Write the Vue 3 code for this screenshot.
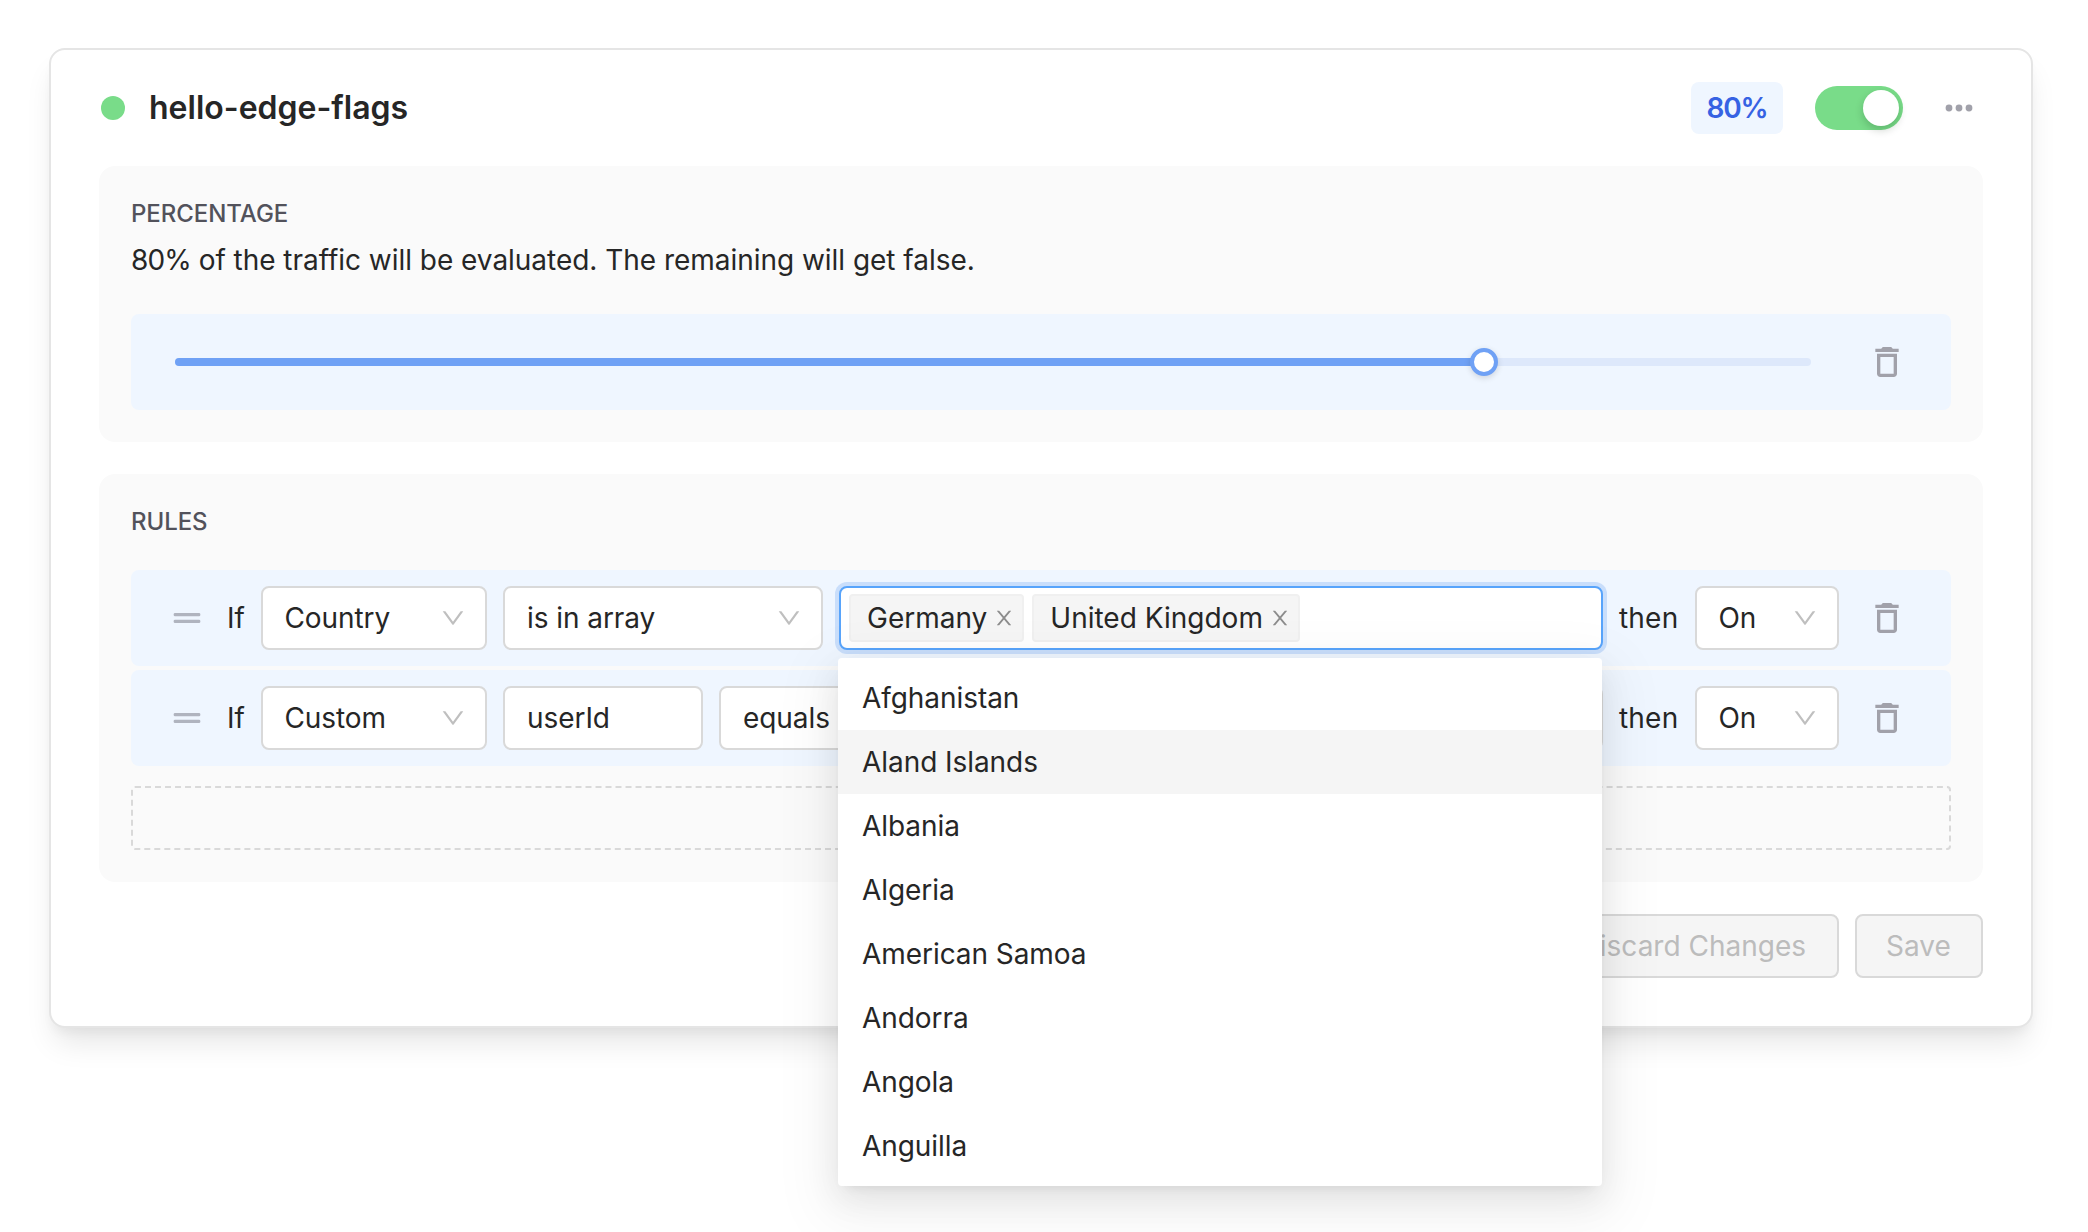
<script setup>
import { ref, computed } from 'vue'

const percentage = ref(80)
const percent = computed(() => `${percentage.value}%`)
const selected = ['Germany', 'United Kingdom']
const countries = [
  'Afghanistan',
  'Aland Islands',
  'Albania',
  'Algeria',
  'American Samoa',
  'Andorra',
  'Angola',
  'Anguilla',
]
const active = 'Aland Islands'
const rules = [
  { id: 1, field: 'Country', operator: 'is in array', tags: selected, result: 'On' },
  { id: 2, field: 'Custom', key: 'userId', operator: 'equals', result: 'On' },
]

const chevron =
  'M884 256h-75c-5.1 0-9.9 2.5-12.9 6.6L512 654.2 227.9 262.6c-3-4.1-7.8-6.6-12.9-6.6h-75c-6.5 0-10.3 7.4-6.5 12.7l352.6 486.1c12.8 17.6 39 17.6 51.7 0l352.6-486.1c3.9-5.3.1-12.7-6.4-12.7z'
const cross =
  'M563.8 512l262.5-312.9c4.4-5.2.7-13.1-6.1-13.1h-79.8c-4.7 0-9.2 2.1-12.3 5.7L511.6 449.8 295.1 191.7c-3-3.6-7.5-5.7-12.3-5.7H203c-6.8 0-10.5 7.9-6.1 13.1L459.4 512 196.9 824.9A7.95 7.95 0 00203 838h79.8c4.7 0 9.2-2.1 12.3-5.7l216.5-258.1 216.5 258.1c3 3.6 7.5 5.7 12.3 5.7h79.8c6.8 0 10.5-7.9 6.1-13.1L563.8 512z'
const trash =
  'M6 19c0 1.1.9 2 2 2h8c1.1 0 2-.9 2-2V7H6v12zM8 9h8v10H8V9zm7.5-5l-1-1h-5l-1 1H5v2h14V4z'
</script>

<template>
  <main class="page">
    <section class="card">
      <header class="head">
        <span class="status"></span>
        <h1 class="title">hello-edge-flags</h1>
        <span class="badge">{{ percent }}</span>
        <span class="toggle"><span class="knob"></span></span>
        <svg class="more" viewBox="0 0 32 32">
          <circle cx="6" cy="16" r="3.4" />
          <circle cx="16" cy="16" r="3.4" />
          <circle cx="26" cy="16" r="3.4" />
        </svg>
      </header>

      <section class="panel">
        <h2 class="label">PERCENTAGE</h2>
        <p class="desc">
          <span class="amount">{{ percent }}</span> of the traffic will be evaluated. The remaining will get false.
        </p>
        <div class="strip slider-strip">
          <div class="rail">
            <div class="fill" :style="{ width: percent }"></div>
            <span class="handle" :style="{ left: percent }"></span>
          </div>
          <svg class="trash" viewBox="0 0 24 24"><path :d="trash" /></svg>
        </div>
      </section>

      <section class="panel rules">
        <h2 class="label">RULES</h2>
        <div class="rows">
          <div v-for="rule in rules" :key="rule.id" class="strip rule">
            <svg class="drag" viewBox="0 0 24 24">
              <rect x="4" y="9" width="16" height="2" rx="0.8" />
              <rect x="4" y="13" width="16" height="2" rx="0.8" />
            </svg>
            <span class="if">If</span>
            <div class="field country">
              <span>{{ rule.field }}</span>
              <svg class="chevron" viewBox="64 64 896 896"><path :d="chevron" /></svg>
            </div>
            <div v-if="rule.key" class="field key">{{ rule.key }}</div>
            <div class="field operator" :class="{ short: rule.key }">
              <span>{{ rule.operator }}</span>
              <svg class="chevron" viewBox="64 64 896 896"><path :d="chevron" /></svg>
            </div>
            <div v-if="rule.tags" class="field value multi">
              <span v-for="tag in rule.tags" :key="tag" class="tag">
                {{ tag }}
                <svg class="cross" viewBox="64 64 896 896"><path :d="cross" /></svg>
              </span>
              <ul class="menu">
                <li v-for="c in countries" :key="c" :class="{ active: c === active }">{{ c }}</li>
              </ul>
            </div>
            <div v-else class="field value"></div>
            <span class="then">then</span>
            <div class="field result">
              <span>{{ rule.result }}</span>
              <svg class="chevron" viewBox="64 64 896 896"><path :d="chevron" /></svg>
            </div>
            <svg class="trash" viewBox="0 0 24 24"><path :d="trash" /></svg>
          </div>
        </div>
        <div class="dropzone"></div>
      </section>

      <footer class="actions">
        <button class="btn" disabled>Discard Changes</button>
        <button class="btn save" disabled>Save</button>
      </footer>
    </section>
  </main>
</template>

<style>
body {
  background: #fff;
  overflow: hidden;
}
</style>

<style scoped>
* {
  box-sizing: border-box;
}
.page {
  width: 2088px;
  height: 1232px;
  padding: 48px 55px 0 49px;
  overflow: hidden;
  font-family: Inter, 'Liberation Sans', sans-serif;
  font-size: 28px;
  line-height: 44px;
  letter-spacing: -0.06px;
  color: #262626;
}
.card {
  height: 980px;
  padding: 32px 48px 48px;
  border: 2px solid #e5e5e5;
  border-radius: 16px;
  background: #fff;
  box-shadow: 0 20px 30px -6px rgba(0, 0, 0, 0.1), 0 8px 12px -4px rgba(0, 0, 0, 0.05);
}
.head {
  display: flex;
  align-items: center;
  height: 52px;
  padding: 0 8px 0 2px;
}
.status {
  width: 24px;
  height: 24px;
  border-radius: 50%;
  background: #79dc89;
}
.title {
  flex: 1;
  margin: 0 0 0 24px;
  font-size: 32px;
  font-weight: 600;
  letter-spacing: 0;
}
.badge {
  width: 92px;
  height: 52px;
  border-radius: 8px;
  background: #eff6ff;
  color: #3662e3;
  font-weight: 600;
  line-height: 52px;
  letter-spacing: -1.2px;
  text-align: center;
}
.toggle {
  display: flex;
  justify-content: flex-end;
  width: 88px;
  height: 44px;
  margin-left: 32px;
  padding: 4px;
  border-radius: 22px;
  background: #79dc89;
}
.knob {
  width: 36px;
  height: 36px;
  border-radius: 50%;
  background: #fff;
  box-shadow: 0 4px 8px rgba(0, 35, 11, 0.2);
}
.more {
  width: 32px;
  height: 32px;
  margin-left: 40px;
  fill: #a1a1aa;
}
.panel {
  height: 276px;
  margin-top: 32px;
  padding: 32px;
  border-radius: 16px;
  background: #fafafa;
}
.rules {
  height: 408px;
}
.label {
  height: 32px;
  margin: 0;
  color: #52525b;
  font-size: 24px;
  font-weight: 500;
  line-height: 32px;
}
.desc {
  height: 44px;
  margin: 8px 0 32px;
  letter-spacing: -0.03px;
  white-space: nowrap;
}
.amount {
  letter-spacing: -0.9px;
}
.strip {
  display: flex;
  align-items: center;
  height: 96px;
  border-radius: 8px;
  background: #eff6ff;
}
.slider-strip {
  padding: 0 44px;
}
.rail {
  position: relative;
  flex: 1;
  height: 8px;
  margin-right: 56px;
  border-radius: 4px;
  background: #dde8fb;
}
.fill {
  height: 8px;
  border-radius: 4px;
  background: #6fa1f5;
}
.handle {
  position: absolute;
  top: -10px;
  width: 28px;
  height: 28px;
  margin-left: -14px;
  border: 4px solid #6fa1f5;
  border-radius: 50%;
  background: #fff;
  box-shadow: 0 2px 6px rgba(0, 0, 0, 0.14);
}
.trash {
  flex: none;
  width: 40px;
  height: 40px;
  fill: #a1a1aa;
}
.rows {
  display: flex;
  flex-direction: column;
  gap: 4px;
  margin-top: 32px;
}
.rule {
  padding: 0 44px 0 36px;
}
.drag {
  flex: none;
  width: 40px;
  height: 40px;
  fill: #b0b4bf;
}
.if {
  width: 18px;
  margin: 0 16px 0 20px;
  white-space: nowrap;
}
.then {
  width: 60px;
  margin: 0 16px;
  letter-spacing: 0.2px;
  white-space: nowrap;
}
.field {
  display: flex;
  align-items: center;
  justify-content: space-between;
  height: 64px;
  padding: 0 20px 0 22px;
  border: 2px solid #d9d9d9;
  border-radius: 8px;
  background: #fff;
  white-space: nowrap;
}
.country {
  width: 226px;
  padding-left: 21.4px;
}
.operator {
  width: 320px;
  margin: 0 16px;
}
.operator.short {
  width: 240px;
}
.key {
  width: 200px;
  margin-left: 16px;
}
.value {
  flex: 1;
}
.multi {
  position: relative;
  justify-content: flex-start;
  gap: 8px;
  padding: 0 8px;
  border-color: #58a4fb;
  box-shadow: 0 0 0 4px #c9defb;
}
.result {
  width: 144px;
  margin-right: 28px;
  padding-left: 21.4px;
}
.chevron {
  flex: none;
  width: 24px;
  height: 24px;
  fill: #bfbfbf;
}
.tag {
  display: flex;
  align-items: center;
  gap: 7px;
  height: 48px;
  padding: 0 8px 0 16px;
  border: 2px solid #f0f0f0;
  border-radius: 4px;
  background: #f5f5f5;
  letter-spacing: 0;
}
.cross {
  width: 20px;
  height: 20px;
  fill: #8c8c8c;
}
.menu {
  position: absolute;
  z-index: 2;
  top: 70px;
  left: -3px;
  width: 764px;
  height: 528px;
  margin: 0;
  padding: 8px 0;
  border-radius: 4px;
  background: #fff;
  box-shadow: 0 6px 12px -8px rgba(0, 0, 0, 0.12), 0 12px 32px rgba(0, 0, 0, 0.08),
    0 18px 56px 16px rgba(0, 0, 0, 0.05);
  list-style: none;
}
.menu li {
  height: 64px;
  padding: 10px 24px;
}
.menu .active {
  background: #f5f5f5;
}
.dropzone {
  height: 64px;
  margin-top: 20px;
  border: 2px dashed #d9d9d9;
  border-radius: 4px;
}
.actions {
  display: flex;
  justify-content: flex-end;
  gap: 16px;
  margin-top: 32px;
}
.btn {
  height: 64px;
  padding: 0 31px 0 29px;
  border: 2px solid #d9d9d9;
  border-radius: 8px;
  background: #f5f5f5;
  color: #bcbcbc;
  font: inherit;
}
.save {
  width: 128px;
}
</style>
